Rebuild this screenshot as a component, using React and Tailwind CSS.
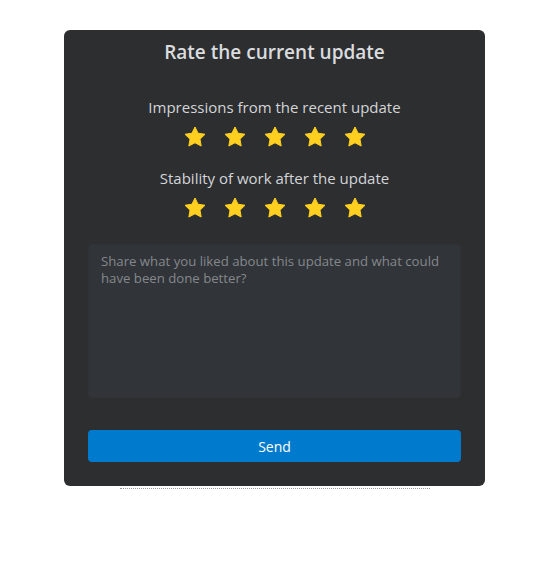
import React, { useState } from "react";

const StarIcon = () => (
  <svg viewBox="0 0 24 24" className="w-6 h-6">
    <polygon
      points="12,2 15.09,8.26 22,9.27 17,14.14 18.18,21.02 12,17.77 5.82,21.02 7,14.14 2,9.27 8.91,8.26"
      fill="#ffd01f"
      stroke="#ffd01f"
      strokeWidth="1"
      strokeLinejoin="round"
    />
  </svg>
);

const StarRow = () => (
  <div className="flex justify-center gap-4 mt-[6px]">
    {[1, 2, 3, 4, 5].map((n) => (
      <button key={n} type="button" className="cursor-pointer">
        <StarIcon />
      </button>
    ))}
  </div>
);

const App = () => {
  const [feedback, setFeedback] = useState("");

  return (
    <div className="min-h-screen bg-white pt-[30px]" style={{ fontFamily: '"Open Sans", "Noto Sans", sans-serif' }}>
      <div className="w-[421px] mx-auto bg-[#2d2e30] rounded-md px-6 pt-2 pb-6">
        <h1 className="text-center text-[19px] leading-7 font-semibold text-[#dadcdf]">Rate the current update</h1>

        <p className="mt-[29px] text-center text-[15px] leading-6 text-[#d3d5d8]">Impressions from the recent update</p>
        <StarRow />

        <p className="mt-[17px] text-center text-[15px] leading-6 text-[#d3d5d8]">Stability of work after the update</p>
        <StarRow />

        <textarea
          className="mt-6 block w-full h-[154px] resize-none rounded-sm bg-[#313438] border border-[#2f3236] px-3 py-2 text-[13.2px] leading-[17px] text-[#d3d5d8] placeholder:text-[#85888d] outline-none"
          placeholder="Share what you liked about this update and what could have been done better?"
          value={feedback}
          onChange={(e) => setFeedback(e.target.value)}
        />

        <button type="submit" className="mt-8 w-full h-8 rounded-sm bg-[#007acc] text-[14px] text-white cursor-pointer">
          Send
        </button>
      </div>
      <div className="w-[310px] mx-auto mt-[2px] border-t border-dotted border-[#9a9a9a]" />
    </div>
  );
};

export default App;
